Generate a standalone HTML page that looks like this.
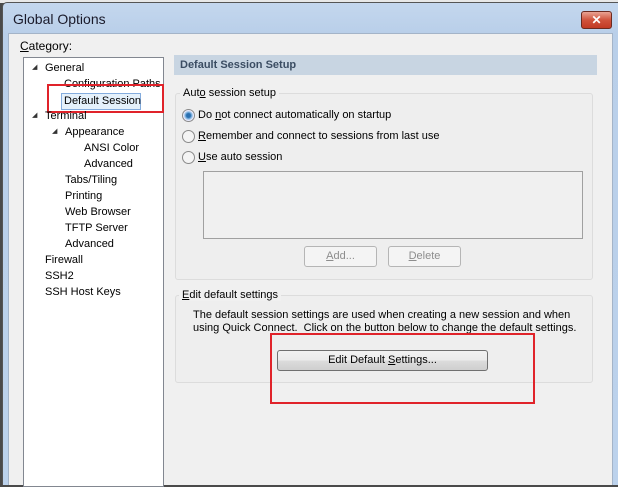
<!DOCTYPE html>
<html><head><meta charset="utf-8"><style>
*{margin:0;padding:0;box-sizing:border-box}
body{width:618px;height:485px;overflow:hidden;background:#4a4a4a;font-family:"Liberation Sans",sans-serif;font-size:11px;color:#000;position:relative}
.a{position:absolute;white-space:nowrap}
u{text-decoration:underline}
</style></head><body>
<div class="a" style="left:0;top:0;width:618px;height:3px;background:#e8e8e8"></div>
<div class="a" style="left:2px;top:2px;width:616px;height:483px;background:linear-gradient(#c4d7ee,#b9cfe9 30px,#bcd2ec);border:1px solid #555;border-right:none;border-bottom:none;border-radius:5px 0 0 0"></div>
<div class="a" style="left:13px;top:11px;font-size:14px;color:#1a1a2a">Global Options</div>
<div class="a" style="left:581px;top:11px;width:31px;height:18px;border:1px solid #6b2a20;border-radius:3px;background:linear-gradient(#e9a393,#d0533c 50%,#c23a24);color:#fff;font-weight:bold;font-size:12px;text-align:center;line-height:16px">✕</div>
<div class="a" style="left:8px;top:33px;width:605px;height:452px;background:#f0f0f0;border:1px solid #a4b4c8;border-bottom:none"></div>
<div class="a" style="left:20px;top:39px;font-size:12px"><u>C</u>ategory:</div>
<div class="a" style="left:23px;top:57px;width:141px;height:430px;background:#fff;border:1px solid #828790"></div>
<div class="a" style="left:32px;top:63px;font-size:7px;color:#333">◢</div>
<div class="a" style="left:45px;top:62px">General</div>
<div class="a" style="left:64px;top:78px">Configuration Paths</div>
<div class="a" style="left:61px;top:93px;width:80px;height:17px;background:#e5f1fb;border:1px solid #84acdd"></div>
<div class="a" style="left:64px;top:95px">Default Session</div>
<div class="a" style="left:47px;top:84px;width:117px;height:29px;border:2px solid #e0232a"></div>
<div class="a" style="left:32px;top:111px;font-size:7px;color:#333">◢</div>
<div class="a" style="left:45px;top:110px">Terminal</div>
<div class="a" style="left:52px;top:127px;font-size:7px;color:#333">◢</div>
<div class="a" style="left:65px;top:126px">Appearance</div>
<div class="a" style="left:84px;top:142px">ANSI Color</div>
<div class="a" style="left:84px;top:158px">Advanced</div>
<div class="a" style="left:65px;top:174px">Tabs/Tiling</div>
<div class="a" style="left:65px;top:190px">Printing</div>
<div class="a" style="left:65px;top:206px">Web Browser</div>
<div class="a" style="left:65px;top:222px">TFTP Server</div>
<div class="a" style="left:65px;top:238px">Advanced</div>
<div class="a" style="left:45px;top:254px">Firewall</div>
<div class="a" style="left:45px;top:270px">SSH2</div>
<div class="a" style="left:45px;top:286px">SSH Host Keys</div>

<div class="a" style="left:174px;top:55px;width:423px;height:20px;background:#c8d5e2"></div>
<div class="a" style="left:180px;top:59px;font-weight:bold;color:#3b4d63">Default Session Setup</div>

<div class="a" style="left:175px;top:93px;width:418px;height:187px;border:1px solid #dcdcdc;border-radius:3px;background:#eeeeee"></div>
<div class="a" style="left:180px;top:87px;background:#f0f0f0;padding:0 3px">Aut<u>o</u> session setup</div>
<div class="a" style="left:182px;top:109px;width:13px;height:13px;border-radius:50%;border:1px solid #8a8a8a;background:radial-gradient(#2a6fb0 2px,#6aa6d8 3px,#eef 5px)"></div>
<div class="a" style="left:198px;top:109px">Do <u>n</u>ot connect automatically on startup</div>
<div class="a" style="left:182px;top:130px;width:13px;height:13px;border-radius:50%;border:1px solid #8a8a8a;background:#f4f4f4"></div>
<div class="a" style="left:198px;top:130px"><u>R</u>emember and connect to sessions from last use</div>
<div class="a" style="left:182px;top:151px;width:13px;height:13px;border-radius:50%;border:1px solid #8a8a8a;background:#f4f4f4"></div>
<div class="a" style="left:198px;top:151px"><u>U</u>se auto session</div>
<div class="a" style="left:203px;top:171px;width:380px;height:68px;border:1px solid #a0a0a0;background:#f0f0f0"></div>
<div class="a" style="left:304px;top:246px;width:73px;height:21px;border:1px solid #b5b5b5;border-radius:3px;background:#f4f4f4;color:#8d8d8d;text-align:center;line-height:19px"><u>A</u>dd...</div>
<div class="a" style="left:388px;top:246px;width:73px;height:21px;border:1px solid #b5b5b5;border-radius:3px;background:#f4f4f4;color:#8d8d8d;text-align:center;line-height:19px"><u>D</u>elete</div>

<div class="a" style="left:175px;top:295px;width:418px;height:88px;border:1px solid #dcdcdc;border-radius:3px;background:#eeeeee"></div>
<div class="a" style="left:179px;top:289px;background:#f0f0f0;padding:0 3px"><u>E</u>dit default settings</div>
<div class="a" style="left:193px;top:309px;line-height:13px">The default session settings are used when creating a new session and when<br>using Quick Connect.&nbsp; Click on the button below to change the default settings.</div>
<div class="a" style="left:277px;top:350px;width:211px;height:21px;border:1px solid #707070;border-radius:3px;background:linear-gradient(#f2f2f2,#ebebeb 50%,#dcdcdc 51%,#cfcfcf);text-align:center;line-height:19px">Edit Default <u>S</u>ettings...</div>
<div class="a" style="left:270px;top:333px;width:265px;height:71px;border:2px solid #e0232a"></div>
</body></html>
